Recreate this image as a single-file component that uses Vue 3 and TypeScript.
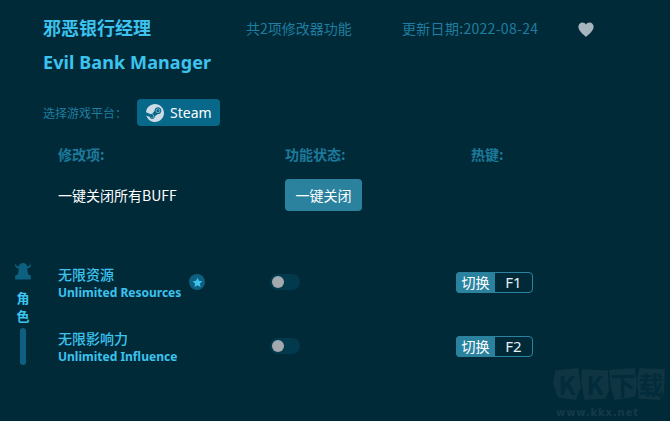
<script setup lang="ts">
interface Cheat {
  zh: string;
  en: string;
  hotkey: string;
  starred: boolean;
}

const cheats: Cheat[] = [
  { zh: "无限资源", en: "Unlimited Resources", hotkey: "F1", starred: true },
  { zh: "无限影响力", en: "Unlimited Influence", hotkey: "F2", starred: false },
];

const steamPath =
  "M11.979 0C5.678 0 .511 4.86.022 11.037l6.432 2.658c.545-.371 1.203-.59 1.912-.59.063 0 .125.004.188.006l2.861-4.142V8.91c0-2.495 2.028-4.524 4.524-4.524 2.494 0 4.524 2.031 4.524 4.527s-2.03 4.525-4.524 4.525h-.105l-4.076 2.911c0 .052.004.105.004.159 0 1.875-1.515 3.396-3.39 3.396-1.635 0-3.016-1.173-3.331-2.727L.436 15.27C1.862 20.307 6.486 24 11.979 24c6.627 0 11.999-5.373 11.999-12S18.605 0 11.979 0zM7.54 18.21l-1.473-.61c.262.543.714.999 1.314 1.25 1.297.539 2.793-.076 3.332-1.375.263-.63.264-1.319.005-1.949s-.75-1.121-1.377-1.383c-.624-.26-1.29-.249-1.878-.03l1.523.63c.956.4 1.409 1.5 1.009 2.455-.397.957-1.497 1.41-2.454 1.012H7.54zm11.415-9.303c0-1.662-1.353-3.015-3.015-3.015-1.665 0-3.015 1.353-3.015 3.015 0 1.665 1.35 3.015 3.015 3.015 1.663 0 3.015-1.35 3.015-3.015zm-5.273-.005c0-1.252 1.013-2.266 2.265-2.266 1.249 0 2.266 1.014 2.266 2.266 0 1.251-1.017 2.265-2.266 2.265-1.253 0-2.265-1.014-2.265-2.265z";
</script>

<template>
  <div class="page">
    <header class="head">
      <h1 class="title">邪恶银行经理</h1>
      <span class="info count">共2项修改器功能</span>
      <span class="info date">更新日期:2022-08-24</span>
      <svg class="heart" viewBox="0 0 16 15" width="16" height="15">
        <path
          d="M8 15C6.5 13.2 0.4 9.4 0.4 4.8 0.4 2.2 2.3 0.4 4.5 0.4 6 0.4 7.3 1.2 8 2.6 8.7 1.2 10 0.4 11.5 0.4 13.7 0.4 15.6 2.2 15.6 4.8 15.6 9.4 9.5 13.2 8 15Z"
          fill="#a7b5bf"
        />
      </svg>
    </header>
    <h2 class="title title-en">Evil Bank Manager</h2>

    <div class="platform">
      <span class="platform-label">选择游戏平台：</span>
      <div class="steam">
        <svg viewBox="0 0 24 24" width="18" height="18">
          <path :d="steamPath" fill="#cddbe8" />
        </svg>
        <span>Steam</span>
      </div>
    </div>

    <div class="table">
      <span class="col-head">修改项:</span>
      <span class="col-head">功能状态:</span>
      <span class="col-head">热键:</span>
      <span class="all-label">一键关闭所有BUFF</span>
      <button class="all-btn">一键关闭</button>
    </div>

    <div class="section">
      <aside class="side">
        <svg class="helmet" viewBox="0 0 18 18" width="18" height="18">
          <path
            d="M1 1C1.4 3 2.6 4.2 4.8 4.4 5.2 2.2 6.8 1 9 1 11.2 1 12.8 2.2 13.2 4.4 15.4 4.2 16.6 3 17 1 17.6 4 16.2 6.2 13.4 6.6 13.4 9 13.6 11 14.4 12.6L16.8 13.4V17.4H1.2V13.4L3.6 12.6C4.4 11 4.6 9 4.6 6.6 1.8 6.2 0.4 4 1 1Z"
            fill="#0d607f"
          />
        </svg>
        <span class="side-text">角</span>
        <span class="side-text second">色</span>
        <div class="side-bar"></div>
      </aside>

      <div class="rows">
        <div v-for="c in cheats" :key="c.hotkey" class="row">
          <div class="names">
            <div class="zh">{{ c.zh }}</div>
            <div class="en">{{ c.en }}</div>
          </div>
          <div class="badge-cell">
            <span v-if="c.starred" class="badge">
              <svg viewBox="0 0 24 24" width="11" height="11">
                <path
                  d="M12 1.5l3.2 6.8 7.4 1-5.4 5.1 1.4 7.4L12 18.2l-6.6 3.6 1.4-7.4L1.4 9.3l7.4-1z"
                  fill="#3cc3ee"
                />
              </svg>
            </span>
          </div>
          <div class="toggle"><span class="knob"></span></div>
          <div class="hotkey">
            <span class="hk-name">切换</span>
            <span class="hk-key">{{ c.hotkey }}</span>
          </div>
        </div>
      </div>
    </div>

    <div class="watermark">
      <div class="wm-logo">
        <span class="wm-a">K</span>
        <span class="wm-b">K</span>
        <span class="wm-c">下</span>
        <span class="wm-d">载</span>
      </div>
      <div class="wm-url">www.kkx.net</div>
    </div>
  </div>
</template>

<style scoped>
.page {
  position: relative;
  width: 670px;
  height: 421px;
  overflow: hidden;
  background: #012a39;
  font-family: "Noto Sans", "Noto Sans CJK SC", sans-serif;
  color: #fff;
}
.head {
  display: flex;
  align-items: center;
  height: 28px;
  padding: 14px 0 0 43px;
}
.title {
  margin: 0;
  font-size: 18px;
  line-height: 28px;
  font-weight: 700;
  color: #3cc3ee;
  font-family: "Noto Sans CJK SC", "Noto Sans", sans-serif;
}
.head .title {
  width: 203px;
  margin-top: -2px;
}
.title-en {
  margin-top: 6px;
  padding-left: 43px;
  font-family: "Noto Sans", sans-serif;
  letter-spacing: 0.1px;
}
.info {
  font-size: 14px;
  line-height: 28px;
  color: #1f7d9f;
  font-family: "Noto Sans CJK SC", sans-serif;
}
.count {
  width: 156px;
}
.date {
  width: 176px;
  letter-spacing: 0.3px;
}
.heart {
  display: block;
  margin-top: 2px;
}
.platform {
  display: flex;
  align-items: center;
  margin-top: 23px;
  padding-left: 43px;
}
.platform-label {
  width: 94px;
  font-size: 12px;
  color: #1f7d9f;
  font-family: "Noto Sans CJK SC", sans-serif;
}
.steam {
  display: flex;
  align-items: center;
  gap: 6px;
  width: 83px;
  height: 27px;
  box-sizing: border-box;
  padding-left: 9px;
  border-radius: 4px;
  background: #07688a;
  font-size: 14px;
}
.table {
  display: grid;
  grid-template-columns: 227px 186px 1fr;
  grid-template-rows: 20px 32px;
  row-gap: 15px;
  align-items: center;
  margin-top: 18px;
  padding-left: 58px;
}
.col-head {
  font-size: 14px;
  font-weight: 700;
  color: #1d7a9b;
  font-family: "Noto Sans CJK SC", sans-serif;
}
.all-label {
  font-size: 14px;
  font-family: "Noto Sans CJK SC", sans-serif;
}
.all-btn {
  width: 77px;
  height: 32px;
  padding: 0;
  border: 0;
  border-radius: 4px;
  background: #2a829f;
  color: #fff;
  font-size: 14px;
  font-family: "Noto Sans CJK SC", sans-serif;
}
.section {
  display: flex;
  margin-top: 50px;
}
.side {
  display: flex;
  flex-direction: column;
  align-items: center;
  width: 46px;
  padding-top: 1px;
  box-sizing: border-box;
}
.helmet {
  display: block;
}
.side-text {
  margin-top: 9px;
  line-height: 18px;
  font-size: 13px;
  font-weight: 700;
  color: #3cc3ee;
  font-family: "Noto Sans CJK SC", sans-serif;
}
.side-text.second {
  margin-top: 0;
}
.side-bar {
  width: 6px;
  height: 37px;
  margin-top: 3px;
  border-radius: 3px;
  background: #0d607f;
}
.rows {
  display: flex;
  flex-direction: column;
  gap: 28px;
  padding: 3px 0 0 12px;
}
.row {
  display: flex;
  align-items: center;
  height: 36px;
}
.names {
  width: 131px;
  padding-top: 3px;
}
.zh {
  font-size: 14px;
  line-height: 18px;
  font-weight: 500;
  color: #3cc3ee;
  font-family: "Noto Sans CJK SC", sans-serif;
}
.en {
  margin-top: 1px;
  font-size: 12px;
  line-height: 18px;
  font-weight: 700;
  color: #3cc3ee;
}
.badge-cell {
  width: 81px;
}
.badge {
  display: flex;
  align-items: center;
  justify-content: center;
  width: 16px;
  height: 16px;
  border-radius: 50%;
  background: #0d607f;
}
.toggle {
  display: flex;
  align-items: center;
  width: 30px;
  height: 16px;
  padding-left: 2px;
  box-sizing: border-box;
  border-radius: 8px;
  background: #03394d;
  margin-right: 156px;
}
.knob {
  width: 12px;
  height: 12px;
  border-radius: 50%;
  background: #a3a9ad;
}
.hotkey {
  display: flex;
  width: 77px;
  height: 21px;
  box-sizing: border-box;
  border: 1px solid #2a829f;
  border-radius: 4px;
  font-size: 15px;
  line-height: 19px;
}
.hk-name {
  width: 39px;
  margin: -1px 0 -1px -1px;
  padding-top: 1px;
  text-align: center;
  border-radius: 4px 0 0 4px;
  background: #2a829f;
  font-size: 14px;
  font-family: "Noto Sans CJK SC", sans-serif;
}
.hk-key {
  flex: 1;
  text-align: center;
  color: #e3f0f5;
}
.watermark {
  position: absolute;
  left: 553px;
  top: 368px;
  width: 112px;
}
.wm-logo {
  display: flex;
  justify-content: space-between;
  font-size: 25px;
  line-height: 32px;
  font-weight: 700;
  color: #022c3b;
  font-family: "Noto Sans CJK SC", sans-serif;
}
.wm-logo span {
  width: 28px;
  text-align: center;
  background: #0f3442;
}
.wm-a {
  clip-path: polygon(8% 8%, 90% 0, 100% 60%, 82% 100%, 18% 92%, 0 50%);
}
.wm-b {
  clip-path: polygon(4% 4%, 96% 8%, 100% 70%, 86% 96%, 12% 100%, 0 40%);
}
.wm-c {
  clip-path: polygon(0 6%, 92% 0, 100% 50%, 94% 90%, 20% 100%, 6% 60%);
}
.wm-d {
  clip-path: polygon(10% 0, 100% 4%, 96% 80%, 80% 100%, 6% 96%, 0 30%);
}
.wm-url {
  margin-top: 7px;
  padding-left: 3px;
  font-size: 10px;
  line-height: 12px;
  font-weight: 700;
  letter-spacing: 0.9px;
  color: #143a48;
  font-family: "DejaVu Sans", sans-serif;
}
</style>

<style>
html,
body {
  background: #012a39;
}
</style>
